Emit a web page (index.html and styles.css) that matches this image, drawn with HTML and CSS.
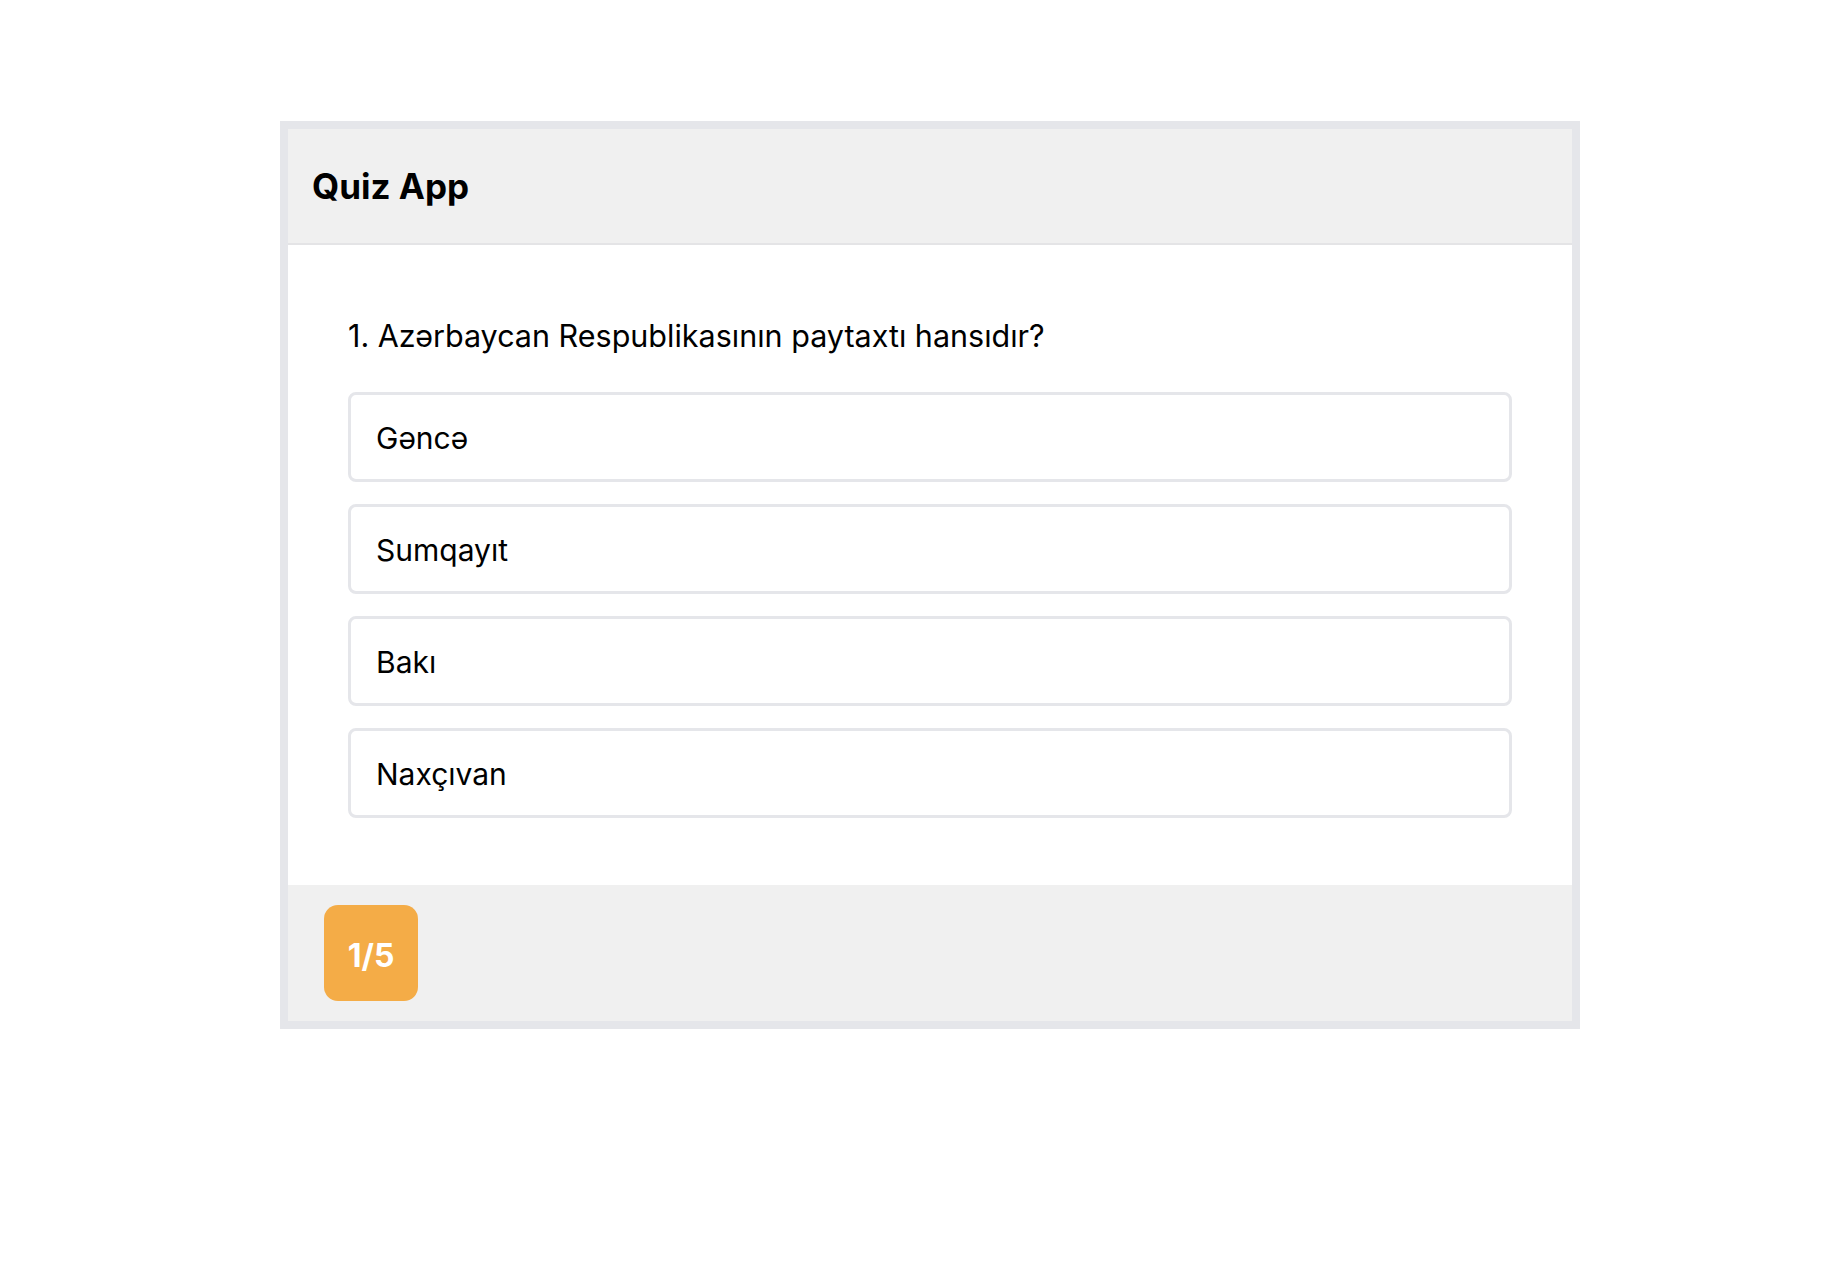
FILE: index.html
```html
<!DOCTYPE html>
<html lang="az">
<head>
<meta charset="utf-8">
<title>Quiz App</title>
<link rel="stylesheet" href="styles.css">
</head>
<body>
<div class="quiz">
  <header class="quiz-header">
    <h1 class="quiz-title">Quiz App</h1>
  </header>
  <main class="quiz-body">
    <p class="question">1. Azərbaycan Respublikasının paytaxtı hansıdır?</p>
    <ul class="options">
      <li class="option">Gəncə</li>
      <li class="option">Sumqayıt</li>
      <li class="option">Bakı</li>
      <li class="option">Naxçıvan</li>
    </ul>
  </main>
  <footer class="quiz-footer">
    <span class="counter">1/5</span>
  </footer>
</div>
</body>
</html>
```

FILE: styles.css
```css
* { box-sizing: border-box; }

body {
  margin: 0;
  background: #ffffff;
  font-family: Inter, "Noto Sans", "Liberation Sans", sans-serif;
  color: #000000;
}

.quiz {
  width: 1300px;
  margin: 121px 0 0 280px;
  border: 8px solid #e5e6ea;
  display: flex;
  flex-direction: column;
}

.quiz-header {
  background: #f0f0f0;
  height: 116px;
  padding: 35px 24px 0;
  border-bottom: 2px solid #e4e4e6;
}

.quiz-title {
  margin: 0;
  font-size: 35px;
  font-weight: 700;
  line-height: 44px;
}

.quiz-body {
  background: #ffffff;
  padding: 73px 60px 67px;
}

.question {
  margin: 0 0 38px;
  font-size: 30.5px;
  line-height: 36px;
  font-weight: 400;
}

.options {
  list-style: none;
  margin: 0;
  padding: 0;
  display: flex;
  flex-direction: column;
  gap: 22px;
}

.option {
  height: 90px;
  border: 3px solid #e5e6ea;
  border-radius: 8px;
  padding: 26px 26px 24px 25px;
  font-size: 30px;
  line-height: 34px;
}

.quiz-footer {
  background: #f0f0f0;
  height: 136px;
  padding: 20px 36px;
  display: flex;
  align-items: flex-start;
}

.counter {
  display: block;
  width: 94px;
  height: 96px;
  background: #f4ac47;
  color: #ffffff;
  border-radius: 14px;
  padding: 27px 0 21px;
  text-align: center;
  font-size: 32px;
  font-weight: 700;
  line-height: 48px;
}
```
